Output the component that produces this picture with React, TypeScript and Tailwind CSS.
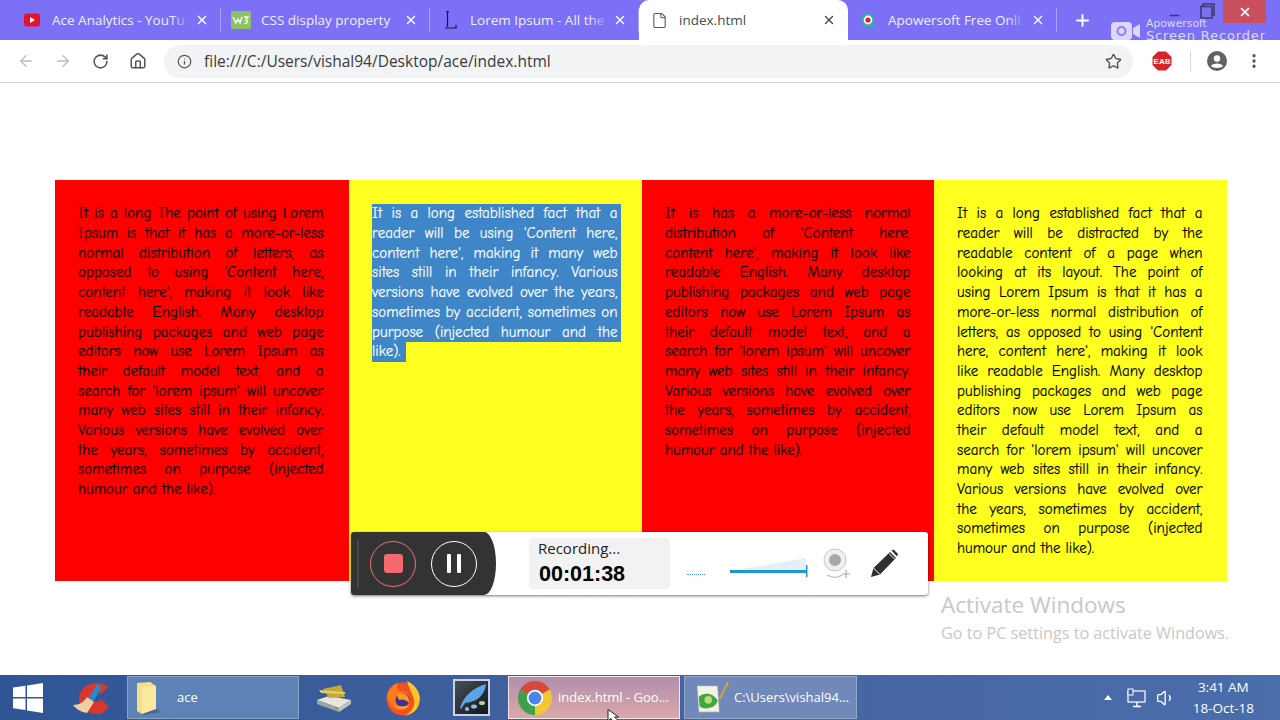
import React from "react";
import { X, ArrowLeft, ArrowRight, RotateCw, Home, Info, Star, Plus, EllipsisVertical, File, Minus, Volume1 } from "lucide-react";

const col1 = ["It is a long The point of using Lorem","Ipsum is that it has a more-or-less","normal distribution of letters, as","opposed to using 'Content here,","content here', making it look like","readable English. Many desktop","publishing packages and web page","editors now use Lorem Ipsum as","their default model text, and a","search for 'lorem ipsum' will uncover","many web sites still in their infancy.","Various versions have evolved over","the years, sometimes by accident,","sometimes on purpose (injected","humour and the like)."];
const col3 = ["It is has a more-or-less normal","distribution of 'Content here,","content here', making it look like","readable English. Many desktop","publishing packages and web page","editors now use Lorem Ipsum as","their default model text, and a","search for 'lorem ipsum' will uncover","many web sites still in their infancy.","Various versions have evolved over","the years, sometimes by accident,","sometimes on purpose (injected","humour and the like)."];
const col4 = ["It is a long established fact that a","reader will be distracted by the","readable content of a page when","looking at its layout. The point of","using Lorem Ipsum is that it has a","more-or-less normal distribution of","letters, as opposed to using 'Content","here, content here', making it look","like readable English. Many desktop","publishing packages and web page","editors now use Lorem Ipsum as","their default model text, and a","search for 'lorem ipsum' will uncover","many web sites still in their infancy.","Various versions have evolved over","the years, sometimes by accident,","sometimes on purpose (injected","humour and the like)."];
const col2 = ["It is a long established fact that a","reader will be using 'Content here,","content here', making it many web","sites still in their infancy. Various","versions have evolved over the years,","sometimes by accident, sometimes on","purpose (injected humour and the"];

function Line({ text }: { text: string }) {
  return <div className="h-[19.7px] whitespace-nowrap [text-align:justify] [text-align-last:justify]">{text}</div>;
}

function Lines({ lines }: { lines: string[] }) {
  return (
    <>
      {lines.slice(0, -1).map((l, i) => <Line key={i} text={l} />)}
      <div className="h-[19.7px] whitespace-nowrap">{lines[lines.length - 1]}</div>
    </>
  );
}

function Column({ bg, children }: { bg: string; children: React.ReactNode }) {
  return (
    <div className={`${bg} pb-[22px] pl-[23px] pt-[24.4px] font-['Comic_Sans_MS','Comic_Neue','Open_Sans',sans-serif] text-[15px] leading-[19.7px] text-black [-webkit-text-stroke:0.15px]`}>
      <div className="w-[245.5px]">{children}</div>
    </div>
  );
}

function Tab({ icon, title, active, fade }: { icon: React.ReactNode; title: string; active?: boolean; fade?: boolean }) {
  return (
    <div className={`relative flex h-10 w-[209px] shrink-0 items-center pl-[10px] pr-[12px] ${active ? "rounded-t-[10px] bg-white text-[#4a4a4a]" : "text-[#f0eeff]"}`}>
      <span className="flex h-5 w-5 shrink-0 items-center justify-center">{icon}</span>
      <span className="ml-[10px] min-w-0 flex-1 overflow-hidden whitespace-nowrap text-[13.5px] leading-5">
        {title}
      </span>
      {fade && <span className="absolute right-[30px] top-2 h-6 w-5 bg-gradient-to-r from-transparent to-[#7b70f6]" />}
      <X size={14} strokeWidth={2.4} className={active ? "text-[#444]" : "text-white"} />
      {!active && <span className="absolute right-0 top-2 h-6 w-px bg-[#a9a2fa]" />}
    </div>
  );
}

function TaskButton({ icon, text, className }: { icon: React.ReactNode; text: string; className: string }) {
  return (
    <div className={`flex h-[43px] shrink-0 items-center border ${className}`}>
      <span className="flex w-[44px] shrink-0 justify-center">{icon}</span>
      <span className="ml-[5px] whitespace-nowrap text-[13px] text-white">{text}</span>
    </div>
  );
}

const ChromeLogo = () => (
  <svg width="36" height="36" viewBox="0 0 36 36" className="ml-[8px]">
    <path d="M18 18 L3.3 9.5 A17 17 0 0 1 32.7 9.5 Z" fill="#d9483b" />
    <path d="M18 18 L32.7 9.5 A17 17 0 0 1 18 35 Z" fill="#f4c534" />
    <path d="M18 18 L18 35 A17 17 0 0 1 3.3 9.5 Z" fill="#3f9f4e" />
    <circle cx="18" cy="18" r="8.2" fill="#fff" />
    <circle cx="18" cy="18" r="6.4" fill="#4a86e8" />
  </svg>
);

export default function App() {
  return (
    <div className="relative flex h-screen w-full flex-col overflow-hidden bg-white font-['Open_Sans',sans-serif]">
      {/* Tab strip */}
      <div className="relative flex h-10 shrink-0 items-center bg-[#7b70f6] pl-[12px]">
        <Tab title="Ace Analytics - YouTu" fade icon={
          <svg width="16" height="14" viewBox="0 0 16 14"><rect width="16" height="13" y="0.5" rx="3" fill="#e8112b" /><path d="M6 4 L11 7 L6 10 Z" fill="#fff" /></svg>
        } />
        <Tab title="CSS display property" icon={
          <svg width="20" height="18" viewBox="0 0 20 18"><rect width="20" height="18" rx="1" fill="#8cc265" /><path d="M2 6 L5 12 L7 8 L9 12 L11 6" stroke="#fff" strokeWidth="1.4" fill="none" /><path d="M13 6 H17 L15 9 C17 9 17.5 13 13 12.5" stroke="#fff" strokeWidth="1.3" fill="none" /></svg>
        } />
        <Tab title="Lorem Ipsum - All the" fade icon={
          <svg width="16" height="20" viewBox="0 0 16 20"><path d="M4 1.5 H7 M5.5 1.5 V17 M3 18 H14 V15" stroke="#1a1a2a" strokeWidth="1.2" fill="none" /></svg>
        } />
        <Tab title="index.html" active icon={<File size={17} strokeWidth={1.5} className="text-[#555]" />} />
        <Tab title="Apowersoft Free Onli" fade icon={
          <svg width="16" height="16" viewBox="0 0 16 16"><path d="M8 1 A7 7 0 1 0 8 15 L15 15 L13.5 11.5 A7 7 0 0 0 8 1 Z" fill="#35a8b0" /><circle cx="8" cy="8" r="4.4" fill="#fff" /><circle cx="8" cy="8" r="2.6" fill="#d81f3a" /></svg>
        } />
        <Plus size={19} strokeWidth={2.4} className="ml-[16px] text-white" />
        {/* window controls and recorder watermark */}
        <Minus size={15} strokeWidth={2.4} className="absolute left-[1167px] top-[8px] text-[#3b3b6b]" />
        <svg width="15" height="16" viewBox="0 0 15 16" className="absolute left-[1200px] top-[3px]"><rect x="3" y="1" width="11" height="11" fill="none" stroke="#3b3b6b" strokeWidth="1.5" /><rect x="1" y="3.5" width="11" height="11.5" fill="#7b70f6" stroke="#3b3b6b" strokeWidth="1.5" /></svg>
        <div className="absolute right-[14px] top-0 flex h-[23px] w-[43px] items-center justify-center bg-[#c9505f]">
          <X size={14} strokeWidth={3} className="text-white" />
        </div>
        <div className="absolute left-[1111px] top-[18px] flex items-center gap-[6px] opacity-90">
          <svg width="29" height="22" viewBox="0 0 29 22"><rect x="0" y="2" width="21" height="18" rx="4" fill="#e6e3ff" /><circle cx="10.5" cy="11" r="5" fill="#8d84f5" /><circle cx="10.5" cy="11" r="3" fill="#e6e3ff" /><path d="M22 8 L29 4 V18 L22 14 Z" fill="#e6e3ff" /></svg>
          <div className="flex flex-col font-['DejaVu_Sans',sans-serif] text-[#e6e3ff]">
            <span className="text-[10.8px] leading-[11px]">Apowersoft</span>
            <span className="whitespace-nowrap text-[13px] leading-[14px] tracking-[0.85px]">Screen Recorder</span>
          </div>
        </div>
      </div>

      {/* Toolbar */}
      <div className="flex h-[43px] shrink-0 items-center border-b border-[#d2d2d2] bg-white pl-[17px]">
        <ArrowLeft size={18} strokeWidth={2} className="text-[#bdbdbd]" />
        <ArrowRight size={18} strokeWidth={2} className="ml-[19px] text-[#bdbdbd]" />
        <RotateCw size={17} strokeWidth={2.2} className="ml-[20px] text-[#555]" />
        <Home size={18} strokeWidth={2} className="ml-[20px] text-[#555]" />
        <div className="ml-[17px] flex h-[33px] w-[969px] items-center rounded-full bg-[#f1f3f4] pl-[13px]">
          <Info size={15} strokeWidth={2} className="text-[#555]" />
          <span className="ml-[12px] text-[15.5px] leading-5 text-[#3a3a3a]">file:///C:/Users/vishal94/Desktop/ace/index.html</span>
          <Star size={17} strokeWidth={2} className="ml-auto mr-[11px] text-[#555]" />
        </div>
        <svg width="20" height="20" viewBox="0 0 20 20" className="ml-[19px]"><path d="M6 0.5 H14 L19.5 6 V14 L14 19.5 H6 L0.5 14 V6 Z" fill="#d8232a" /><text x="10" y="13" textAnchor="middle" fontSize="8" fontWeight="700" fill="#fff" fontFamily="Liberation Sans">EAB</text></svg>
        <span className="ml-[18px] h-5 w-px bg-[#d9d9d9]" />
        <svg width="20" height="20" viewBox="0 0 20 20" className="ml-[16px]"><circle cx="10" cy="10" r="10" fill="#5f6368" /><circle cx="10" cy="7.5" r="3.2" fill="#fff" /><path d="M4 15 C5.5 11.5 14.5 11.5 16 15 C14 17.6 6 17.6 4 15 Z" fill="#fff" /></svg>
        <EllipsisVertical size={18} strokeWidth={2.4} className="ml-[18px] text-[#555]" />
      </div>

      {/* Page */}
      <div className="min-h-0 flex-1 pl-[55px] pt-[97px]">
        <div className="grid w-[1172px] grid-cols-[294px_293px_292px_293px]">
          <Column bg="bg-[#ff0000]"><Lines lines={col1} /></Column>
          <Column bg="bg-[#ffff1f]">
            <div className="mr-[-3px] bg-[#3f86c8] pr-[3px] text-white">
              {col2.map((l, i) => <Line key={i} text={l} />)}
            </div>
            <div className="h-[19.7px] w-[34px] bg-[#3f86c8] text-white">like).</div>
          </Column>
          <Column bg="bg-[#ff0000]"><Lines lines={col3} /></Column>
          <Column bg="bg-[#ffff1f]"><Lines lines={col4} /></Column>
        </div>
      </div>

      {/* Recorder overlay */}
      <div className="absolute left-[351px] top-[532px] flex h-[63px] w-[577px] items-center overflow-hidden rounded-[3px] bg-white font-['Liberation_Sans',sans-serif] shadow-[0_1px_3px_rgba(0,0,0,0.55)]">
        <div className="flex h-full w-[145px] shrink-0 items-center rounded-r-[12px_32px] bg-[#333333] pl-[6px]">
          <span className="h-[50px] w-[2px] bg-[#484848]" />
          <div className="ml-[11px] flex h-[46px] w-[46px] items-center justify-center rounded-full border border-[#ef7076]">
            <span className="h-[19px] w-[19px] rounded-[3px] bg-[#f5696f]" />
          </div>
          <div className="ml-[15px] flex h-[46px] w-[46px] items-center justify-center gap-[6px] rounded-full border border-white">
            <span className="h-[19px] w-[4px] rounded-[1px] bg-white" />
            <span className="h-[19px] w-[4px] rounded-[1px] bg-white" />
          </div>
        </div>
        <div className="ml-[33px] flex h-[51px] w-[141px] shrink-0 flex-col rounded-[4px] bg-[#f2f2f2] pl-[9px]">
          <span className="font-['Open_Sans',sans-serif] text-[15px] leading-5 text-[#222]">Recording...</span>
          <span className="ml-px mt-[3px] text-[21.5px] font-bold leading-[26px] text-black">00:01:38</span>
        </div>
        <span className="ml-[17px] mt-[22px] w-[18px] border-t border-dotted border-[#4b9bd0]" />
        <svg width="78" height="26" viewBox="0 0 78 26" className="ml-[25px] mt-[10px]">
          <path d="M0 15 L76 2 V15 Z" fill="#e2f1f8" />
          <rect x="0" y="14" width="77" height="3" fill="#2196cf" />
          <rect x="76" y="9" width="1.5" height="12" fill="#2196cf" />
        </svg>
        <svg width="28" height="32" viewBox="0 0 28 32" className="ml-[15px]">
          <circle cx="12" cy="12" r="11" fill="#f0f0f0" stroke="#c8c8c8" />
          <circle cx="12" cy="12" r="6" fill="#a8a8a8" />
          <path d="M4 27 C9 30 15 30 19 27" stroke="#bdbdbd" fill="none" strokeWidth="1.4" />
          <path d="M23 22 V30 M19 26 H27" stroke="#a8a8a8" strokeWidth="1.2" />
        </svg>
        <svg width="30" height="30" viewBox="0 0 30 30" className="ml-[18px]">
          <path d="M2 28 L4.5 19 L21 3 L27 9 L11 25.5 Z" fill="#2f2f2f" />
          <path d="M22.5 1.5 L24.5 0.5 L29 5 L28 7.5 Z" fill="#2f2f2f" />
          <path d="M4.5 19 L11 25.5" stroke="#fff" strokeWidth="1" />
          <path d="M20 4.5 L25.8 10.3" stroke="#fff" strokeWidth="1" />
        </svg>
      </div>

      {/* Activate Windows */}
      <div className="absolute left-[941px] top-[589px] text-[#c8c8c8]">
        <div className="text-[22.5px] leading-[32px]">Activate Windows</div>
        <div className="mt-px text-[16.2px] leading-[22px]">Go to PC settings to activate Windows.</div>
      </div>

      {/* Taskbar */}
      <div className="flex h-[45px] shrink-0 items-center bg-gradient-to-r from-[#2f5596] via-[#44639f] to-[#4a6dab] pl-[13px] font-['Open_Sans',sans-serif]">
        <svg width="30" height="30" viewBox="0 0 30 30"><path d="M0 4.5 L12.5 2.8 V14 H0 Z M14 2.5 L30 0 V14 H14 Z M0 15.5 H12.5 V27 L0 25.3 Z M14 15.5 H30 V30 L14 27.5 Z" fill="#fff" /></svg>
        <svg width="38" height="38" viewBox="0 0 38 38" className="ml-[30px]">
          <path d="M36 8 C24 -1 8 5 6 18 C5 30 18 38 30 34 L36 28 L28 20 C25 25 18 23 18 18 C18 13 24 11 28 15 Z" fill="#d8372c" />
          <path d="M24 5 L29 8 L20 23 L15 20 Z" fill="#2e86cc" />
          <path d="M14 18 L21 23 L14 34 C8 33 3 30 0 26 C6 26 11 23 14 18 Z" fill="#f0cf9e" />
        </svg>
        <TaskButton className="ml-[16px] w-[172px] border-[#ffffff44] bg-[#5d82b5]" text="ace" icon={
          <svg width="28" height="34" viewBox="0 0 28 34" className="-ml-[4px]"><path d="M3 2 L16 1 L22 5 V28 L8 33 L3 30 Z" fill="#f6de8a" /><path d="M8 6 L22 5 V28 L8 33 Z" fill="#fbe99f" /><path d="M8 33 L22 28 L27 31 L10 34 Z" fill="#33507f" opacity="0.5" /></svg>
        } />
        <svg width="38" height="30" viewBox="0 0 38 30" className="ml-[16px]">
          <path d="M2 17 L14 13 L36 17 L24 25 Z" fill="#e6e6df" /><path d="M2 17 L24 25 V29 L2 21 Z" fill="#9fa59f" /><path d="M24 25 L36 17 V21 L24 29 Z" fill="#c0c4bd" />
          <path d="M8 6 L26 2 L30 14 L14 15 Z" fill="#c4a83e" /><path d="M4 7 L30 9 L30 11 L6 10 Z" fill="#e0cd70" />
          <rect x="20" y="24" width="3" height="2.5" fill="#4fb35b" />
        </svg>
        <svg width="36" height="36" viewBox="0 0 36 36" className="ml-[32px]">
          <circle cx="18" cy="19" r="16.5" fill="#f4511e" />
          <path d="M22 1 C32 6 36 14 34.5 22 C33 30 27 35 20 35.5 C27 32 30 26 29 20 C28 14 24 9 22 1 Z" fill="#ffc62b" />
          <path d="M2 15 C4 8 9 4 13 3 C11 7 12 10 15 11 L21 12 C25 16 26 22 23 27 C19 32 9 31 6 25 C3.5 22 2 18 2 15 Z" fill="#ff7a1a" />
          <circle cx="17.5" cy="20" r="7" fill="#45308f" />
          <path d="M12 14 C18 11 25 15 24 23 C21 19 16 19 14 20 C13 18 12 16 12 14 Z" fill="#ff9a1f" />
          <path d="M10 25 C14 30 21 29 24 25 C20 27 15 27 10 25 Z" fill="#ffb52b" />
        </svg>
        <div className="ml-[32px] flex h-[37px] w-[37px] items-center justify-center border-2 border-[#c9d3e3] bg-gradient-to-br from-[#4a4f5a] to-[#14161b]">
          <svg width="32" height="32" viewBox="0 0 32 32"><path d="M4 26 C7 15 16 6 30 2 C29 12 22 20 9 21 L5 27 Z" fill="#5ba4e6" /><circle cx="11" cy="27" r="2" fill="#86c5f0" /><ellipse cx="18" cy="24.5" rx="3" ry="2" fill="#86c5f0" /><ellipse cx="26" cy="21" rx="3" ry="2" fill="#b2d98c" /></svg>
        </div>
        <TaskButton className="ml-[18px] w-[172px] border-[#f3e6ea] bg-gradient-to-b from-[#b08fab] to-[#dba8a8]" text="index.html - Goo..." icon={<ChromeLogo />} />
        <TaskButton className="ml-[4px] w-[173px] border-[#ffffff44] bg-[#7088ba]" text="C:\Users\vishal94..." icon={
          <svg width="36" height="38" viewBox="0 0 36 38" className="ml-[10px]"><path d="M2 6 H24 L26 34 H4 Z" fill="#eef3e4" stroke="#8a8a8a" strokeWidth="0.6" /><path d="M4 18 C10 12 20 14 24 22 C22 30 10 32 5 28 Z" fill="#43a53c" /><circle cx="14" cy="21" r="4" fill="#b4df7a" /><path d="M26 20 L35 2" stroke="#caa443" strokeWidth="2.4" /></svg>
        } />
        <div className="ml-auto flex items-center">
          <span className="h-0 w-0 border-x-[4px] border-b-[5px] border-x-transparent border-b-white" />
          <svg width="20" height="20" viewBox="0 0 20 20" className="ml-[15px]"><rect x="1" y="3" width="17" height="11" fill="none" stroke="#fff" strokeWidth="1.2" /><rect x="1" y="1" width="5" height="6" fill="#44639f" stroke="#fff" /><path d="M10 14 V18 M6 18.5 H14" stroke="#fff" strokeWidth="1.4" /></svg>
          <Volume1 size={20} strokeWidth={1.6} className="ml-[9px] text-white" />
          <div className="ml-[17px] mr-[26px] flex flex-col items-center text-[13.5px] leading-[21px] text-white">
            <span>3:41 AM</span>
            <span>18-Oct-18</span>
          </div>
        </div>
      </div>

      {/* Mouse pointer */}
      <svg width="13" height="14" viewBox="0 0 13 14" className="absolute left-[607px] top-[709px]"><path d="M1 0.5 V12 L4 9.5 L6 13.5 H13 L7.5 8 H11.5 Z" fill="#fff" stroke="#111" strokeWidth="0.9" /></svg>
    </div>
  );
}
